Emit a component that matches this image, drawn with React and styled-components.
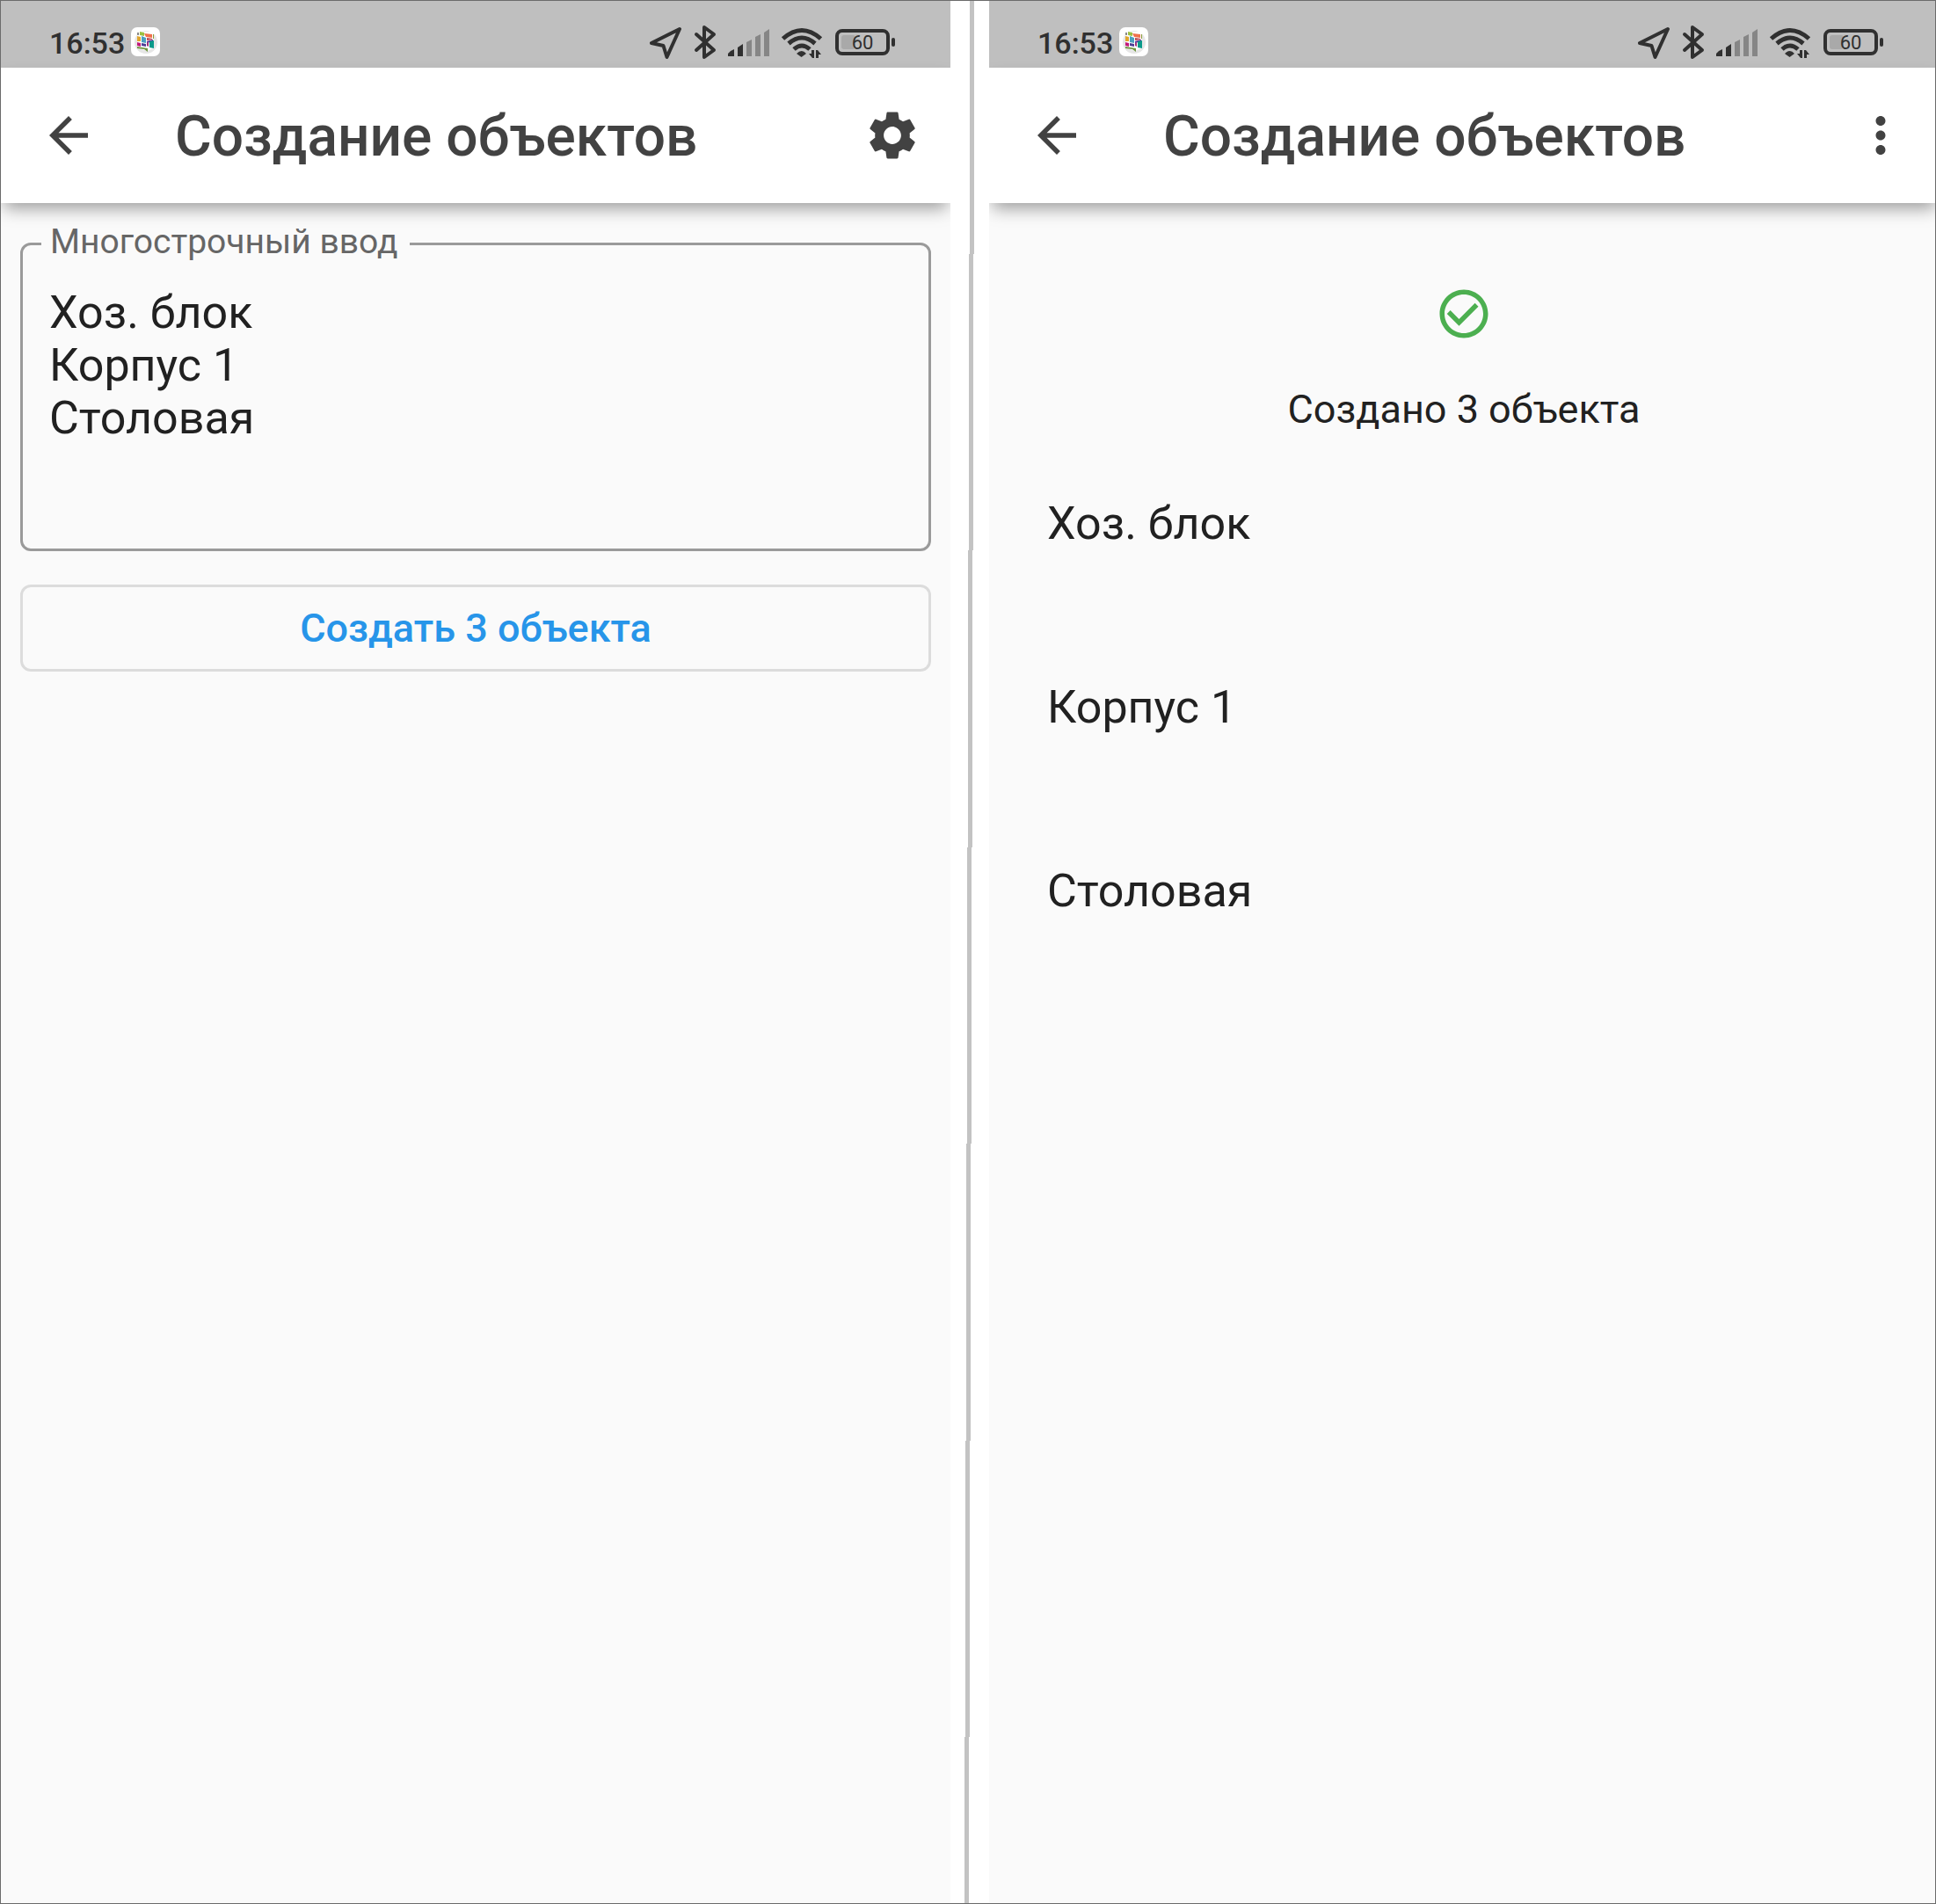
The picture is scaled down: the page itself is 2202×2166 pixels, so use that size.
import React, { useState } from "react";
import styled, { createGlobalStyle } from "styled-components";
import {
  MdArrowBack,
  MdCheckCircleOutline,
  MdMoreVert,
  MdSettings,
} from "react-icons/md";

const textColor = "#212121";
const barColor = "#424242";
const statusColor = "#303030";
const pageColor = "#fafafa";

const objects = ["Хоз. блок", "Корпус 1", "Столовая"];

function AppBadge() {
  return (
    <svg width="33" height="33" viewBox="0 0 33 33" aria-hidden="true">
      <rect width="33" height="33" rx="7" fill="#fff" />
      <circle cx="17" cy="17" r="13" fill="#e6e6e6" />
      <path d="M7 5h19v19l-8 3-11-4z" fill="#fff" />
      <path d="M7 6h2v3H7z" fill="#8a8a8a" />
      <path d="M10 5l5 1v4l-5-1z" fill="#9bc03f" />
      <path d="M15 7l9 1v4l-7-1z" fill="#f0704a" />
      <path d="M25 8h1v5h-1z" fill="#8c9a3a" />
      <path d="M7 10l4 1v5H7z" fill="#e0a52c" />
      <path d="M12 10l5 2v6l-5-1z" fill="#4a9fc0" />
      <path d="M18 12l6 1v1l-6 1z" fill="#b8434e" />
      <path d="M18 16l7-2v2l-7 2z" fill="#5a2a96" />
      <path d="M7 17l4 1v4l-4-1z" fill="#c2187a" />
      <path d="M12 18l5 1v3l-5-1z" fill="#4b3d94" />
      <path d="M18 18l2-1v5l-2-1z" fill="#a0307a" />
      <path d="M21 16l5-1v9l-5-1z" fill="#0b9a8a" />
      <path d="M7 22l12 2v4l-4-3-8-1z" fill="#6f9440" />
    </svg>
  );
}

function StatusIcons() {
  return (
    <svg width="280" height="40" viewBox="0 0 280 40" aria-hidden="true">
      <g
        fill="none"
        stroke={statusColor}
        strokeWidth="4"
        strokeLinejoin="round"
        strokeLinecap="round"
      >
        <path d="M34 5L2 21l13.500 3L19.500 37z" />
        <path d="M53 11l20 18-11 8V3l11 8-20 18" />
      </g>
      <g fill={statusColor}>
        <path d="M89 36v-3l3-3 4-2v8z" />
        <path d="M100 36V26l6-4v14z" />
      </g>
      <g fill="#868686">
        <path d="M110 36V20l6-3v19z" />
        <path d="M120 36V14l6-3v25z" />
        <path d="M130 36V9l6-4v31z" />
      </g>
      <g fill="none" stroke={statusColor} strokeWidth="5">
        <path d="M151.500 16q21.500-19 43 0" />
        <path d="M158 21.500q15-13 30 0" />
        <path d="M164 28q9-8 18 0" />
      </g>
      <path d="M167 33q6-6 11 0l-5.500 4z" fill={statusColor} />
      <path
        d="M187 29v9h-2l-4-5h3v-4zM189 38v-9h2l4 5h-3v4z"
        fill={statusColor}
      />
      <rect x="218" y="12" width="16" height="16" rx="3" fill="#a9a9a9" />
      <rect
        x="213"
        y="7"
        width="58"
        height="26"
        rx="6"
        fill="none"
        stroke={statusColor}
        strokeWidth="4"
      />
      <rect x="275" y="15" width="4" height="10" rx="2" fill={statusColor} />
      <text
        x="242"
        y="28"
        fontSize="22"
        textAnchor="middle"
        fill={statusColor}
      >
        60
      </text>
    </svg>
  );
}

function Phone({ action, children }) {
  return (
    <Screen>
      <StatusBar>
        <Clock>
          <time>16:53</time>
          <AppBadge />
        </Clock>
        <StatusIcons />
      </StatusBar>
      <AppBar>
        <IconButton aria-label="Назад">
          <MdArrowBack />
        </IconButton>
        <h1>Создание объектов</h1>
        {action}
      </AppBar>
      {children}
    </Screen>
  );
}

export default function App() {
  const [value, setValue] = useState(objects.join("\n"));

  return (
    <Root>
      <GlobalStyle />
      <Pane>
        <Phone
          action={
            <IconButton aria-label="Настройки">
              <MdSettings />
            </IconButton>
          }
        >
          <Form onSubmit={(e) => e.preventDefault()}>
            <Field>
              <legend>
                <label htmlFor="names">Многострочный ввод</label>
              </legend>
              <textarea
                id="names"
                rows={4}
                spellCheck={false}
                value={value}
                onChange={(e) => setValue(e.target.value)}
              />
            </Field>
            <SubmitButton type="submit">Создать 3 объекта</SubmitButton>
          </Form>
        </Phone>
      </Pane>

      <Divider viewBox="0 0 44 2164" preserveAspectRatio="none">
        <path d="M22 0h5v288h-1v337h-1v338h-1v337h-1v338h-1v337h-1v189h-5v-189h1v-337h1v-338h1v-337h1v-338h1v-337h1z" />
      </Divider>

      <Pane $cropped>
        <Phone
          action={
            <IconButton aria-label="Меню">
              <MdMoreVert />
            </IconButton>
          }
        >
          <Result>
            <MdCheckCircleOutline />
            <p>Создано 3 объекта</p>
          </Result>
          <List>
            {objects.map((name) => (
              <li key={name}>{name}</li>
            ))}
          </List>
        </Phone>
      </Pane>
    </Root>
  );
}

const GlobalStyle = createGlobalStyle`
  * {
    box-sizing: border-box;
  }

  body {
    margin: 0;
    background: #fff;
    color: ${textColor};
    font-family: Roboto, "Liberation Sans", sans-serif;
  }

  button,
  textarea {
    font-family: inherit;
  }
`;

const Root = styled.main`
  display: grid;
  grid-template-columns: 1080fr 44fr 1076fr;
  min-height: 100vh;
  border: 1px solid #6b6b6b;
`;

/* the second screen runs a little past the frame */
const Pane = styled.div`
  display: grid;
  grid-template-columns: ${({ $cropped }) =>
    $cropped ? "calc(100% + 4px)" : "100%"};
  overflow: hidden;
  background: ${pageColor};
`;

const Divider = styled.svg`
  width: 100%;
  height: 0;
  min-height: 100%;
  fill: #c3c3c3;
  shape-rendering: crispEdges;
`;

const Screen = styled.section`
  display: flex;
  flex-direction: column;
`;

const StatusBar = styled.div`
  display: flex;
  align-items: flex-end;
  justify-content: space-between;
  height: 76px;
  padding: 0 62px 9px 55px;
  background: #bfbfbf;
`;

const Clock = styled.div`
  display: flex;
  align-items: center;
  gap: 7px;
  padding-bottom: 2px;
  color: ${statusColor};
  font-size: 34px;
  line-height: 34px;
  font-weight: 500;

  time {
    padding-top: 3px;
  }
`;

const AppBar = styled.header`
  display: flex;
  align-items: center;
  height: 154px;
  padding: 0 33px 0 44px;
  background: #fff;
  box-shadow: 0 10px 18px -4px rgba(0, 0, 0, 0.38);

  h1 {
    flex: 1;
    margin: 0 0 0 88px;
    padding-top: 3px;
    color: ${barColor};
    font-size: 64px;
    line-height: 76px;
    font-weight: 500;
  }
`;

const IconButton = styled.button`
  display: flex;
  padding: 0;
  border: 0;
  background: none;
  color: ${barColor};
  font-size: 66px;
  cursor: pointer;
`;

const Form = styled.form`
  display: flex;
  flex-direction: column;
  gap: 38px;
  padding: 22px;
`;

const Field = styled.fieldset`
  min-width: 0;
  margin: 0;
  padding: 25px 30px 58px;
  border: 3px solid #9a9a9a;
  border-radius: 12px;

  legend {
    margin-left: -9px;
    padding: 0 13px 4px 10px;
    color: #666;
    font-size: 39px;
    line-height: 44px;
  }

  textarea {
    display: block;
    width: 100%;
    padding: 0;
    border: 0;
    outline: 0;
    resize: none;
    background: none;
    color: ${textColor};
    font-size: 52px;
    line-height: 60px;
  }
`;

const SubmitButton = styled.button`
  height: 99px;
  border: 3px solid #dcdcdc;
  border-radius: 12px;
  background: none;
  color: #2795e9;
  font-size: 45px;
  font-weight: 500;
  cursor: pointer;
`;

const Result = styled.div`
  display: flex;
  flex-direction: column;
  align-items: center;
  gap: 50px;
  padding-top: 93px;

  svg {
    color: #4caf50;
    font-size: 66px;
  }

  p {
    margin: 0;
    font-size: 45px;
    line-height: 52px;
  }
`;

const List = styled.ul`
  display: flex;
  flex-direction: column;
  gap: 144px;
  margin: 0;
  padding: 71px 66px;
  list-style: none;

  li {
    font-size: 52px;
    line-height: 65px;
  }
`;
